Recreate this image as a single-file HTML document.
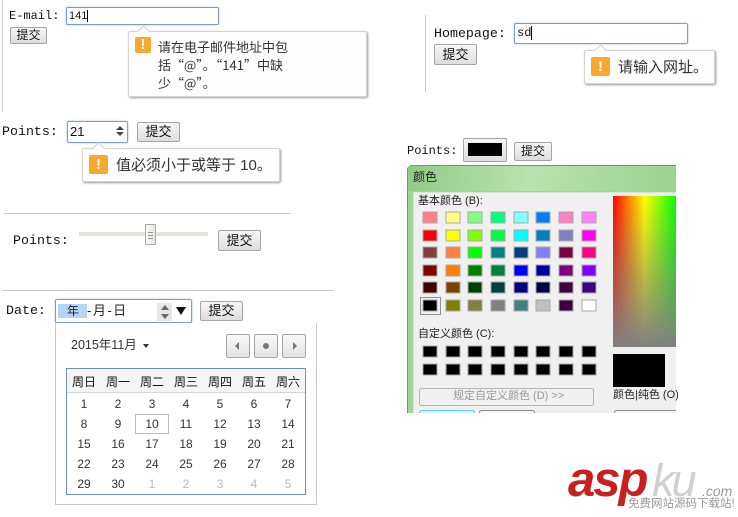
<!DOCTYPE html>
<html lang="zh"><head><meta charset="utf-8"><title>HTML5 表单验证</title>
<style>
html,body{margin:0;padding:0;background:#fff;width:738px;height:517px;overflow:hidden}
body{position:relative;font-family:"Liberation Sans","Noto Sans CJK SC",sans-serif;color:#222}
.a,.t,.m,.btn,.inp,.bub,.ic,.c{position:absolute}
.t{white-space:nowrap;line-height:1}
.m{white-space:nowrap;line-height:1;font-family:"Liberation Mono","Noto Sans CJK SC",monospace;font-size:13.3px;color:#111}
.btn{box-sizing:border-box;border:1px solid #a5a5a5;border-radius:2px;background:linear-gradient(#f6f6f6,#dedede);font-size:12px;color:#111;text-align:center;white-space:nowrap}
.inp{box-sizing:border-box;border:1px solid #7b9ec9;border-radius:2px;background:#fff;box-shadow:0 0 2px #a9c4e4;font-size:12px;color:#111;white-space:nowrap}
.bub{box-sizing:border-box;background:#fdfdfd;border:1px solid #d4d4d4;border-radius:2px;box-shadow:1px 1px 2px #999;font-size:13px;color:#333}
.ar{position:absolute;top:-5px;width:8px;height:8px;background:#fdfdfd;border-left:1px solid #d4d4d4;border-top:1px solid #d4d4d4;transform:rotate(45deg)}
.ic{background:#f7a92f;border-radius:2px;color:#fff;font-weight:bold;text-align:center;font-size:15px}
.c{width:34px;text-align:center;font-size:12px;line-height:1;color:#333}
.g{color:#bbb}
.h{color:#111;top:376px}
</style></head><body>

<!-- email -->
<div class="a" style="left:2px;top:0;width:1px;height:112px;background:#c9c9c9"></div>
<div class="m" style="left:9px;top:10px;font-size:12px">E-mail:</div>
<div class="inp" style="left:66px;top:7px;width:153px;height:18px;padding:1px 2px;line-height:14px;font-size:11px">141<span style="border-left:1px solid #000;margin-left:0"></span></div>
<div class="btn" style="left:10px;top:27px;width:37px;height:17px;line-height:15px">提交</div>
<div class="bub" style="left:128px;top:31px;width:239px;height:66px"><div class="ar" style="left:10px"></div>
<div class="ic" style="left:6px;top:5px;width:16px;height:16px;line-height:16px">!</div>
<div class="t" style="left:29px;top:6px;font-size:13px;line-height:18px;font-family:'Noto Sans CJK SC',sans-serif">请在电子邮件地址中包<br>括“@”。“141”中缺<br>少“@”。</div></div>

<!-- points number -->
<div class="m" style="left:2px;top:125px">Points:</div>
<div class="inp" style="left:67px;top:121px;width:61px;height:22px;padding:2px 2px;line-height:16px;font-size:13px">21
<span class="a" style="left:48px;top:4px;width:0;height:0;border:4px solid transparent;border-top:0;border-bottom:4px solid #444"></span>
<span class="a" style="left:48px;top:10px;width:0;height:0;border:4px solid transparent;border-bottom:0;border-top:4px solid #444"></span></div>
<div class="btn" style="left:137px;top:122px;width:43px;height:20px;line-height:18px;font-size:13px">提交</div>
<div class="bub" style="left:82px;top:148px;width:198px;height:34px"><div class="ar" style="left:11px"></div>
<div class="ic" style="left:6px;top:6px;width:19px;height:19px;line-height:19px">!</div>
<div class="t" style="left:33px;top:9px;font-size:15px">值必须小于或等于 10。</div></div>

<!-- homepage -->
<div class="a" style="left:425px;top:15px;width:1px;height:77px;background:#c9c9c9"></div>
<div class="m" style="left:434px;top:27px">Homepage:</div>
<div class="inp" style="left:514px;top:23px;width:174px;height:21px;padding:2px;line-height:15px;font-family:'Liberation Mono',monospace;font-size:12px">sd<span style="border-left:1px solid #000"></span></div>
<div class="btn" style="left:434px;top:44px;width:43px;height:21px;line-height:19px;font-size:13px">提交</div>
<div class="bub" style="left:584px;top:50px;width:131px;height:34px"><div class="ar" style="left:11px"></div>
<div class="ic" style="left:6px;top:6px;width:19px;height:19px;line-height:19px">!</div>
<div class="t" style="left:33px;top:9px;font-size:15px">请输入网址。</div></div>

<!-- color -->
<div class="m" style="left:407px;top:145px;font-size:12px">Points:</div>
<div class="btn" style="left:463px;top:138px;width:44px;height:24px"><div class="a" style="left:4px;top:4px;width:34px;height:13px;background:#000"></div></div>
<div class="btn" style="left:514px;top:142px;width:38px;height:19px;line-height:17px">提交</div>

<!-- colour dialog -->
<div class="a" style="left:407px;top:165px;width:269px;height:248px;background:#a2d497;border-radius:5px 0 0 0;box-shadow:inset 1px 1px 0 #6f9a68;overflow:hidden">
<div class="a" style="left:0;top:0;width:269px;height:26px;background:linear-gradient(100deg,#8fcb84,#b9e2ae 45%,#9ad28e);border-top:1px solid #6f9a68;border-left:1px solid #6f9a68;box-sizing:border-box"></div>
<div class="t" style="left:6px;top:6px;font-size:12px;color:#222">颜色</div>
<div class="a" style="left:6px;top:27px;width:263px;height:221px;background:#f0f0f0;border-top:1px solid #d8e4d6;border-left:1px solid #d8e4d6;box-sizing:border-box"></div>
</div>
<div class="t" style="left:418px;top:196px;font-size:11px;color:#222">基本颜色 (B):</div>
<svg class="a" style="left:407px;top:190px" width="269" height="223" viewBox="407 190 269 223" xmlns="http://www.w3.org/2000/svg">
<defs>
<linearGradient id="hue" x1="0" x2="1" y1="0" y2="0"><stop offset="0" stop-color="#f00"/><stop offset=".5" stop-color="#ff0"/><stop offset="1" stop-color="#0f0"/></linearGradient>
<linearGradient id="gray" x1="0" x2="0" y1="0" y2="1"><stop offset="0" stop-color="#808080" stop-opacity="0"/><stop offset="1" stop-color="#808080"/></linearGradient>
</defs>
<g stroke="#a8a8a8" stroke-width="1">
<rect x="423" y="212" width="14" height="11" fill="#ff8080"/><rect x="446" y="212" width="14" height="11" fill="#ffff80"/><rect x="468" y="212" width="14" height="11" fill="#80ff80"/><rect x="491" y="212" width="14" height="11" fill="#00ff80"/><rect x="514" y="212" width="14" height="11" fill="#80ffff"/><rect x="536" y="212" width="14" height="11" fill="#0080ff"/><rect x="559" y="212" width="14" height="11" fill="#ff80c0"/><rect x="582" y="212" width="14" height="11" fill="#ff80ff"/>
<rect x="423" y="230" width="14" height="11" fill="#ff0000"/><rect x="446" y="230" width="14" height="11" fill="#ffff00"/><rect x="468" y="230" width="14" height="11" fill="#80ff00"/><rect x="491" y="230" width="14" height="11" fill="#00ff40"/><rect x="514" y="230" width="14" height="11" fill="#00ffff"/><rect x="536" y="230" width="14" height="11" fill="#0080c0"/><rect x="559" y="230" width="14" height="11" fill="#8080c0"/><rect x="582" y="230" width="14" height="11" fill="#ff00ff"/>
<rect x="423" y="247" width="14" height="11" fill="#804040"/><rect x="446" y="247" width="14" height="11" fill="#ff8040"/><rect x="468" y="247" width="14" height="11" fill="#00ff00"/><rect x="491" y="247" width="14" height="11" fill="#008080"/><rect x="514" y="247" width="14" height="11" fill="#004080"/><rect x="536" y="247" width="14" height="11" fill="#8080ff"/><rect x="559" y="247" width="14" height="11" fill="#800040"/><rect x="582" y="247" width="14" height="11" fill="#ff0080"/>
<rect x="423" y="265" width="14" height="11" fill="#800000"/><rect x="446" y="265" width="14" height="11" fill="#ff8000"/><rect x="468" y="265" width="14" height="11" fill="#008000"/><rect x="491" y="265" width="14" height="11" fill="#008040"/><rect x="514" y="265" width="14" height="11" fill="#0000ff"/><rect x="536" y="265" width="14" height="11" fill="#0000a0"/><rect x="559" y="265" width="14" height="11" fill="#800080"/><rect x="582" y="265" width="14" height="11" fill="#8000ff"/>
<rect x="423" y="282" width="14" height="11" fill="#400000"/><rect x="446" y="282" width="14" height="11" fill="#804000"/><rect x="468" y="282" width="14" height="11" fill="#004000"/><rect x="491" y="282" width="14" height="11" fill="#004040"/><rect x="514" y="282" width="14" height="11" fill="#000080"/><rect x="536" y="282" width="14" height="11" fill="#000040"/><rect x="559" y="282" width="14" height="11" fill="#400040"/><rect x="582" y="282" width="14" height="11" fill="#400080"/>
<rect x="423" y="300" width="14" height="11" fill="#000000"/><rect x="446" y="300" width="14" height="11" fill="#808000"/><rect x="468" y="300" width="14" height="11" fill="#808040"/><rect x="491" y="300" width="14" height="11" fill="#808080"/><rect x="514" y="300" width="14" height="11" fill="#408080"/><rect x="536" y="300" width="14" height="11" fill="#c0c0c0"/><rect x="559" y="300" width="14" height="11" fill="#400040"/><rect x="582" y="300" width="14" height="11" fill="#ffffff"/>
<rect x="423" y="346" width="14" height="11" fill="#000"/><rect x="446" y="346" width="14" height="11" fill="#000"/><rect x="468" y="346" width="14" height="11" fill="#000"/><rect x="491" y="346" width="14" height="11" fill="#000"/><rect x="514" y="346" width="14" height="11" fill="#000"/><rect x="536" y="346" width="14" height="11" fill="#000"/><rect x="559" y="346" width="14" height="11" fill="#000"/><rect x="582" y="346" width="14" height="11" fill="#000"/>
<rect x="423" y="364" width="14" height="11" fill="#000"/><rect x="446" y="364" width="14" height="11" fill="#000"/><rect x="468" y="364" width="14" height="11" fill="#000"/><rect x="491" y="364" width="14" height="11" fill="#000"/><rect x="514" y="364" width="14" height="11" fill="#000"/><rect x="536" y="364" width="14" height="11" fill="#000"/><rect x="559" y="364" width="14" height="11" fill="#000"/><rect x="582" y="364" width="14" height="11" fill="#000"/>
</g>
<rect x="420.500" y="297.500" width="20" height="17" fill="none" stroke="#333" stroke-dasharray="1 1"/>
<rect x="613" y="196" width="63" height="151" fill="url(#hue)"/>
<rect x="613" y="196" width="63" height="151" fill="url(#gray)"/>
<rect x="613" y="354" width="52" height="33" fill="#000"/>
<rect x="419.500" y="388.500" width="174" height="17" rx="2" fill="#f0f0f0" stroke="#b5b5b5"/>
<rect x="419.500" y="410.500" width="55" height="6" rx="2" fill="#d6f0f8" stroke="#6ec6dc"/>
<rect x="479.500" y="410.500" width="55" height="6" rx="2" fill="#f5f5f5" stroke="#8a8a8a"/>
<rect x="614.500" y="410.500" width="70" height="6" rx="2" fill="#f5f5f5" stroke="#8a8a8a"/>
</svg>
<div class="t" style="left:418px;top:329px;font-size:11px;color:#222">自定义颜色 (C):</div>
<div class="t" style="left:453px;top:391px;font-size:11px;color:#999">规定自定义颜色 (D) &gt;&gt;</div>
<div class="t" style="left:613px;top:390px;font-size:11px;color:#222">颜色|纯色 (O)</div>
<div class="a" style="left:407px;top:413px;width:280px;height:6px;background:#fff"></div>

<!-- slider -->
<div class="a" style="left:4px;top:213px;width:287px;height:1px;background:#c9c9c9"></div>
<div class="m" style="left:13px;top:234px">Points:</div>
<div class="a" style="left:79px;top:232px;width:129px;height:4px;background:#e3e3dc"></div>
<div class="a" style="left:145px;top:224px;width:11px;height:21px;box-sizing:border-box;border:1px solid #aaa;border-radius:1px;background:linear-gradient(90deg,#f8f8f4,#e6e6e0)"><div class="a" style="left:2px;top:7px;width:5px;height:5px;border-top:1px solid #999;border-bottom:1px solid #999"></div><div class="a" style="left:2px;top:10px;width:5px;height:1px;background:#999"></div></div>
<div class="btn" style="left:218px;top:230px;width:43px;height:21px;line-height:19px;font-size:13px">提交</div>

<!-- date -->
<div class="a" style="left:3px;top:290px;width:330px;height:1px;background:#c9c9c9"></div>
<div class="m" style="left:6px;top:304px">Date:</div>
<div class="inp" style="left:55px;top:299px;width:137px;height:24px"></div>
<div class="a" style="left:58px;top:304px;width:29px;height:14px;background:#b5d5f7"></div>
<div class="t" style="left:67px;top:305px;font-size:12px;color:#222">年</div>
<div class="t" style="left:87px;top:304px;font-size:13px;letter-spacing:1.500px;color:#222">-月-日</div>
<div class="a" style="left:157px;top:303px;width:15px;height:18px;background:#e6e6e6"></div>
<div class="a" style="left:161px;top:305px;width:0;height:0;border:4px solid transparent;border-top:0;border-bottom:5px solid #666"></div>
<div class="a" style="left:161px;top:314px;width:0;height:0;border:4px solid transparent;border-bottom:0;border-top:5px solid #666"></div>
<div class="a" style="left:176px;top:307px;width:0;height:0;border:5px solid transparent;border-bottom:0;border-top:8px solid #111"></div>
<div class="btn" style="left:200px;top:301px;width:43px;height:20px;line-height:18px;font-size:13px">提交</div>

<!-- calendar -->
<div class="a" style="left:55px;top:323px;width:262px;height:182px;box-sizing:border-box;border:1px solid #c6c6c6;border-top:0;background:#fff"></div>
<div class="t" style="left:71px;top:339px;font-size:12.500px;color:#333">2015年11月</div>
<div class="a" style="left:143px;top:344px;width:0;height:0;border:3px solid transparent;border-bottom:0;border-top:4px solid #333"></div>
<div class="btn" style="left:226px;top:334px;width:24px;height:24px;background:linear-gradient(#f8f8f8,#e4e4e4)"><div class="a" style="left:8px;top:7px;width:0;height:0;border:4px solid transparent;border-left:0;border-right:4px solid #777"></div></div>
<div class="btn" style="left:254px;top:334px;width:24px;height:24px;background:linear-gradient(#f8f8f8,#e4e4e4)"><div class="a" style="left:8px;top:8px;width:6px;height:6px;border-radius:50%;background:#777"></div></div>
<div class="btn" style="left:282px;top:334px;width:24px;height:24px;background:linear-gradient(#f8f8f8,#e4e4e4)"><div class="a" style="left:10px;top:7px;width:0;height:0;border:4px solid transparent;border-right:0;border-left:4px solid #777"></div></div>
<div class="a" style="left:66px;top:368px;width:240px;height:127px;box-sizing:border-box;border:1px solid #6f93ad;background:#fff"></div>
<div class="a" style="left:67px;top:369px;width:238px;height:24px;background:#f5f5f5;border-bottom:1px solid #cfd8de;box-sizing:border-box"></div>
<div class="a" style="left:135px;top:414px;width:34px;height:20px;box-sizing:border-box;border:1px solid #bbb"></div>
<div class="c h" style="left:67px">周日</div><div class="c h" style="left:101px">周一</div><div class="c h" style="left:135px">周二</div><div class="c h" style="left:169px">周三</div><div class="c h" style="left:203px">周四</div><div class="c h" style="left:237px">周五</div><div class="c h" style="left:271px">周六</div>
<div class="c" style="left:67px;top:398px">1</div><div class="c" style="left:101px;top:398px">2</div><div class="c" style="left:135px;top:398px">3</div><div class="c" style="left:169px;top:398px">4</div><div class="c" style="left:203px;top:398px">5</div><div class="c" style="left:237px;top:398px">6</div><div class="c" style="left:271px;top:398px">7</div>
<div class="c" style="left:67px;top:418px">8</div><div class="c" style="left:101px;top:418px">9</div><div class="c" style="left:135px;top:418px">10</div><div class="c" style="left:169px;top:418px">11</div><div class="c" style="left:203px;top:418px">12</div><div class="c" style="left:237px;top:418px">13</div><div class="c" style="left:271px;top:418px">14</div>
<div class="c" style="left:67px;top:438px">15</div><div class="c" style="left:101px;top:438px">16</div><div class="c" style="left:135px;top:438px">17</div><div class="c" style="left:169px;top:438px">18</div><div class="c" style="left:203px;top:438px">19</div><div class="c" style="left:237px;top:438px">20</div><div class="c" style="left:271px;top:438px">21</div>
<div class="c" style="left:67px;top:458px">22</div><div class="c" style="left:101px;top:458px">23</div><div class="c" style="left:135px;top:458px">24</div><div class="c" style="left:169px;top:458px">25</div><div class="c" style="left:203px;top:458px">26</div><div class="c" style="left:237px;top:458px">27</div><div class="c" style="left:271px;top:458px">28</div>
<div class="c" style="left:67px;top:478px">29</div><div class="c" style="left:101px;top:478px">30</div><div class="c g" style="left:135px;top:478px">1</div><div class="c g" style="left:169px;top:478px">2</div><div class="c g" style="left:203px;top:478px">3</div><div class="c g" style="left:237px;top:478px">4</div><div class="c g" style="left:271px;top:478px">5</div>

<!-- logo -->
<div class="t" style="left:568px;top:456px;font-size:49px;font-weight:bold;font-style:italic;color:#c9201f;letter-spacing:-2px">asp</div>
<div class="t" style="left:652px;top:458px;font-size:45px;font-style:italic;color:#d0d0d0;font-weight:normal;letter-spacing:-3px">ku</div>
<div class="t" style="left:702px;top:484px;font-size:14px;font-style:italic;color:#999">.com</div>
<div class="t" style="left:628px;top:499px;font-size:11.500px;color:#999">免费网站源码下载站!</div>
</body></html>
